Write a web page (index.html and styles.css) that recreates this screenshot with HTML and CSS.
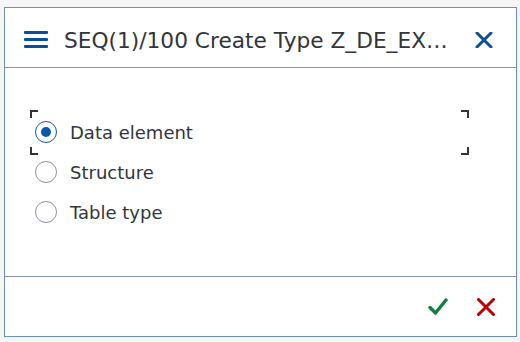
FILE: index.html
```html
<!DOCTYPE html>
<html lang="en">
<head>
  <meta charset="UTF-8">
  <title>Create Type</title>
  <link rel="stylesheet" href="styles.css">
</head>
<body>
  <div class="dialog">
    <div class="dlg-header">
      <svg class="menu-icon" width="24" height="18" viewBox="0 0 24 18">
        <rect x="0" y="0" width="24" height="3" rx="1" fill="#0a4f9c"/>
        <rect x="0" y="7" width="24" height="3" rx="1" fill="#0a4f9c"/>
        <rect x="0" y="14" width="24" height="3" rx="1" fill="#0a4f9c"/>
      </svg>
      <div class="dlg-title">SEQ(1)/100 Create Type Z_DE_EX…</div>
      <svg class="close-icon" width="18" height="16" viewBox="0 0 18 16">
        <path d="M2 1 L16 15 M16 1 L2 15" stroke="#0a4f9c" stroke-width="3" stroke-linecap="round"/>
      </svg>
    </div>
    <div class="dlg-content">
      <div class="radio-row focused">
        <span class="radio checked"></span>
        <span class="radio-label">Data element</span>
        <span class="focus-ring"></span>
      </div>
      <div class="radio-row">
        <span class="radio"></span>
        <span class="radio-label">Structure</span>
      </div>
      <div class="radio-row">
        <span class="radio"></span>
        <span class="radio-label">Table type</span>
      </div>
    </div>
    <div class="dlg-footer">
      <svg class="ok-icon" width="20" height="18" viewBox="0 0 20 18">
        <path d="M2 9.5 L7.5 15 L18 2" fill="none" stroke="#107e3e" stroke-width="3.4" stroke-linecap="round" stroke-linejoin="round"/>
      </svg>
      <svg class="cancel-icon" width="20" height="18" viewBox="0 0 20 18">
        <path d="M2.5 1.5 L17.5 16.5 M17.5 1.5 L2.5 16.5" stroke="#bb0000" stroke-width="3" stroke-linecap="round"/>
      </svg>
    </div>
  </div>
</body>
</html>
```

FILE: styles.css
```css
html, body {
  margin: 0; padding: 0;
  background: #f6f6f6;
  font-family: 'DejaVu Sans', Verdana, sans-serif;
  color: #32363a;
}
body { padding: 7px 0 0 4px; }
.dialog {
  width: 513px; height: 330px; box-sizing: border-box;
  background: #fff; border: 1px solid #6a8fb8;
  display: flex; flex-direction: column;
}
.dlg-header {
  height: 60px; box-sizing: border-box;
  border-bottom: 1px solid #8796a6;
  display: flex; align-items: center;
  padding: 5px 0 0 19px;
}
.menu-icon { flex: none; display: block; }
.dlg-title {
  margin-left: 16px; font-size: 21.7px; white-space: nowrap;
  flex: 1; overflow: hidden;
}
.close-icon { flex: none; display: block; margin-right: 23px; }
.dlg-content {
  flex: 1; padding: 44px 0 0 25px;
}
.radio-row {
  width: 439px; height: 40px; position: relative;
  display: flex; align-items: center; padding-left: 5px;
  box-sizing: border-box;
}
.radio {
  width: 22px; height: 22px; box-sizing: border-box;
  border: 1px solid #89919a; border-radius: 50%;
  display: flex; align-items: center; justify-content: center;
  flex: none;
}
.radio.checked { border: 1.5px solid #0a5aa8; }
.radio.checked::after {
  content: ''; width: 10px; height: 10px; border-radius: 50%;
  background: #0a5aa8;
}
.radio-label { margin-left: 13px; font-size: 18px; }
/* focus brackets */
.focus-ring {
  position: absolute; left: 0; right: 0; top: -2px; bottom: -3px;
  pointer-events: none;
  background:
    linear-gradient(#32363a, #32363a) left top / 8px 2px no-repeat,
    linear-gradient(#32363a, #32363a) left top / 2px 8px no-repeat,
    linear-gradient(#32363a, #32363a) right top / 8px 2px no-repeat,
    linear-gradient(#32363a, #32363a) right top / 2px 8px no-repeat,
    linear-gradient(#32363a, #32363a) left bottom / 8px 2px no-repeat,
    linear-gradient(#32363a, #32363a) left bottom / 2px 8px no-repeat,
    linear-gradient(#32363a, #32363a) right bottom / 8px 2px no-repeat,
    linear-gradient(#32363a, #32363a) right bottom / 2px 8px no-repeat;
}
.dlg-footer {
  height: 60px; box-sizing: border-box;
  border-top: 1px solid #8796a6;
  display: flex; align-items: center; justify-content: flex-end;
  gap: 28px; padding: 0 20px 0 0;
}
.ok-icon, .cancel-icon { display: block; }
```
